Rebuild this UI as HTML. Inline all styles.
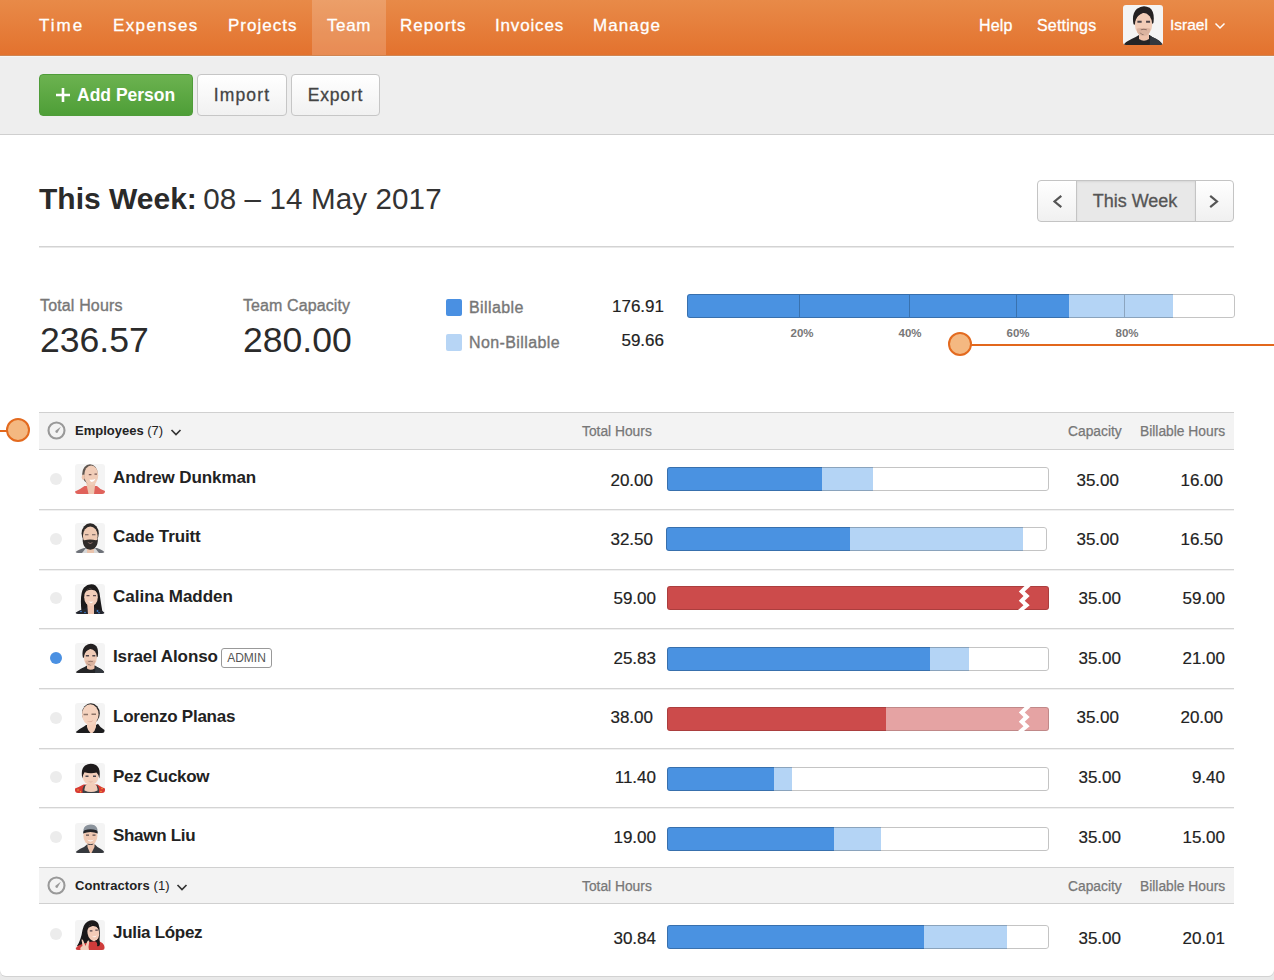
<!DOCTYPE html>
<html lang="en">
<head>
<meta charset="utf-8">
<title>Team – This Week</title>
<style>
*{box-sizing:border-box;margin:0;padding:0}
html,body{width:1274px;height:980px;overflow:hidden}
body{font-family:"Liberation Sans",sans-serif;background:#e9e9e9;color:#222;position:relative}
.page{position:absolute;left:0;top:0;width:1274px;height:976px;background:#fff;border-radius:0 0 6px 6px;overflow:hidden;box-shadow:0 1px 0 #d2d2d2}
/* top nav */
.nav{position:absolute;left:0;top:0;width:1274px;height:56px;background:linear-gradient(#e88a48,#e3722e);border-bottom:1px solid #cf8552}
.nav a{-webkit-text-stroke:.3px #fff;position:absolute;top:0;height:55px;line-height:52px;color:#fff;text-decoration:none;font-size:17px;white-space:nowrap}
.nav a.on{background:rgba(255,255,255,.18);text-align:center}
.nav a.sm{font-size:16px;line-height:52px}
.nav .me{position:absolute;left:1123px;top:5px;width:40px;height:40px;border-radius:3px;overflow:hidden}
.nav .chev{position:absolute;left:1214px;top:22px}
/* sub nav */
.sub{position:absolute;left:0;top:56px;width:1274px;height:79px;background:#eee;border-bottom:1px solid #cfcfcf;box-shadow:inset 0 1px 0 #f6f6f6}
.btn{-webkit-text-stroke:.3px #444;position:absolute;top:18px;height:42px;border:1px solid #c6c6c6;border-radius:4px;background:linear-gradient(#fff,#f1f1f1);color:#444;font-size:17.5px;letter-spacing:.8px;line-height:41px;text-align:center;white-space:nowrap}
.btn.green{-webkit-text-stroke:0;line-height:40px;border:1px solid #4f9c39;background:linear-gradient(#6cb250,#4e9e37);color:#fff;font-weight:700;font-size:17.5px;letter-spacing:0;text-align:left}
.btn.green .plus{position:absolute;left:16px;top:13px}
.btn.green span{position:absolute;left:37px;top:0}
/* heading */
h1{position:absolute;left:39px;top:179px;font-size:30px;line-height:40px;font-weight:700;color:#2a2a2a;white-space:nowrap;letter-spacing:0}
h1 span{font-weight:400;font-size:29.6px;letter-spacing:.1px;margin-left:-2px;color:#333}
.wk{position:absolute;left:1037px;top:180px;width:197px;height:42px;border:1px solid #c4c4c4;border-radius:4px;background:linear-gradient(#fff,#f0f0f0);overflow:hidden}
.wk .mid{-webkit-text-stroke:.3px #555;position:absolute;left:38px;text-indent:-2px;top:-1px;width:120px;height:42px;background:#e8e8e8;border:1px solid #c4c4c4;box-shadow:inset 0 1px 2px rgba(0,0,0,.08);font-size:18px;line-height:40px;text-align:center;color:#555}
.wk svg{position:absolute;top:13px}
hr.rule{position:absolute;left:39px;top:246px;width:1195px;height:2px;border:0;background:linear-gradient(#d3d3d3 50%,#e9e9e9 50%)}
/* stats */
.lbl{-webkit-text-stroke:.35px #777;position:absolute;font-size:16px;color:#777;white-space:nowrap;line-height:20px}
.big{position:absolute;font-size:35.6px;line-height:40px;color:#2b2b2b;white-space:nowrap}
.sw{position:absolute;left:446px;width:16px;height:17px;border-radius:2px}
.num{-webkit-text-stroke:.2px #222;position:absolute;font-size:17px;line-height:20px;color:#222;text-align:right;white-space:nowrap}
.tbar{left:687px;top:294px;width:548px}
.tick{position:absolute;top:295px;width:1px;height:22px;background:rgba(0,0,0,.22)}
.pct{position:absolute;top:326px;width:40px;text-align:center;font-size:11.5px;font-weight:700;color:#777;line-height:14px}
.pin{position:absolute;width:24px;height:24px;border-radius:50%;background:#f4b881;border:2px solid #e36a1f}
.pinline{position:absolute;height:2px;background:#e2671c}
/* table */
.ghead{position:absolute;left:39px;width:1195px;height:38px;background:#f3f3f3;border-top:1px solid #d0d0d0;border-bottom:1px solid #d0d0d0}
.ghead b{position:absolute;left:36px;top:10px;font-size:13px;line-height:16px;color:#222;white-space:nowrap}
.ghead b em{font-style:normal;font-weight:400}
.ghead .clock{position:absolute;left:8px;top:8px}
.ghead .dn{position:absolute;top:16px}
.ghead span{-webkit-text-stroke:.25px #777;position:absolute;top:11px;font-size:13.8px;line-height:16px;color:#777;white-space:nowrap}
.row{position:absolute;left:39px;width:1195px;height:60px;border-bottom:1px solid #d4d4d4;box-shadow:0 1px 0 #f0f0f0}
.row .dot{position:absolute;left:11px;width:12px;height:12px;border-radius:50%;background:#ececec}
.row .dot.on{background:#4a90e2}
.row .av{position:absolute;left:36px;width:30px;height:30px;border-radius:3px;overflow:hidden}
.row .name{position:absolute;left:74px;font-size:17px;font-weight:700;line-height:20px;color:#222;white-space:nowrap;letter-spacing:-.1px}
.row .tag{position:absolute;left:182px;width:51px;height:20px;border:1px solid #999;border-radius:3px;font-size:12px;line-height:18px;text-align:center;color:#555}
.row .n{-webkit-text-stroke:.2px #222;position:absolute;font-size:17px;line-height:20px;color:#222;white-space:nowrap;text-align:right;width:80px}
.bar{position:absolute;height:24px;border-radius:3px;background:#fff;overflow:hidden}
.bar::after{content:"";position:absolute;left:0;top:0;right:0;bottom:0;border-radius:3px;box-shadow:inset 0 0 0 1px rgba(0,0,0,.23)}
.bar i{position:absolute;top:0;height:24px}
.b1{background:#4a92e1;left:0}
.b2{background:#b4d4f5}
.r1{background:#cc4b4b;left:0}
.r2{background:#e5a3a3}
.bar svg{position:absolute;top:0;z-index:2}
.bar.over::after{box-shadow:inset 0 0 0 1px rgba(0,0,0,.16)}
</style>
</head>
<body>
<div class="page">

<div class="nav">
  <a style="left:39px;letter-spacing:2px">Time</a>
  <a style="left:113px;letter-spacing:1.38px">Expenses</a>
  <a style="left:228px;letter-spacing:1.03px">Projects</a>
  <a class="on" style="left:312px;width:74px;letter-spacing:.65px">Team</a>
  <a style="left:400px;letter-spacing:1.01px">Reports</a>
  <a style="left:495px;letter-spacing:.83px">Invoices</a>
  <a style="left:593px;letter-spacing:1.1px">Manage</a>
  <a class="sm" style="left:979px;letter-spacing:.2px">Help</a>
  <a class="sm" style="left:1037px;letter-spacing:.2px">Settings</a>
  <div class="me">
    <svg width="40" height="40" viewBox="0 0 30 30"><rect width="30" height="30" fill="#f4f4f4"/><path d="M0.500 30Q1 27.800 9.500 24L12 22.500H20L22 24Q29 27 29.500 30Z" fill="#242426"/><path d="M20.500 23L22 24Q29 27 29.500 30H20Z" fill="#33383e"/><path d="M12 20H19.500V25.500Q15.700 28 12 25.500Z" fill="#eec2ab"/><path d="M7.900 14.500Q6.300 6.500 10.500 2.800Q15 -0.600 20 2Q24 5 22.800 13.500L21.500 14.500L9.300 15Z" fill="#242122"/><ellipse cx="15.400" cy="14.600" rx="6.500" ry="8.600" fill="#f1ccb7"/><path d="M8.900 12.500Q9.200 8 11.500 6.300Q13 5.600 15 5.800Q13 7 11.500 8Q9.800 9.500 8.900 12.500Z" fill="#242122"/><path d="M10.300 17.800Q12 17 15.500 17.400Q19 17 20.500 17.800Q20.500 21 18 22.600Q15.300 23.800 12.500 22.600Q10.300 21 10.300 17.800Z" fill="#dbb39f"/><path d="M12.300 20.300Q13.800 22.300 16.300 22Q13.800 23 12.300 20.300Z" fill="#4a3a36"/><path d="M10.800 11.900h3.200v1.500h-3.200zM17.300 11.900h3v1.500h-3z" fill="#4d4449"/><path d="M13.200 18.300Q15.500 17.300 18 18.300L17.800 19Q15.500 18.300 13.400 19Z" fill="#8d6e63"/></svg>
  </div>
  <a class="sm" style="left:1170px;font-size:15.5px;line-height:49px">Israel</a>
  <svg class="chev" width="12" height="8" viewBox="0 0 12 8"><path d="M1.5 1.5L6 6l4.500-4.500" fill="none" stroke="#fff" stroke-width="1.5"/></svg>
</div>

<div class="sub">
  <div class="btn green" style="left:39px;width:154px">
    <svg class="plus" width="14" height="14" viewBox="0 0 14 14"><path d="M7 0v14M0 7h14" stroke="#fff" stroke-width="2.600" fill="none"/></svg>
    <span>Add Person</span>
  </div>
  <div class="btn" style="left:197px;width:90px;letter-spacing:1.15px">Import</div>
  <div class="btn" style="left:291px;width:89px">Export</div>
</div>

<h1>This Week: <span>08 – 14 May 2017</span></h1>
<div class="wk">
  <svg style="left:14px" width="12" height="15" viewBox="0 0 12 15"><path d="M9.300 1.800L2.500 7.500L9.300 13.200" fill="none" stroke="#555" stroke-width="2.200"/></svg>
  <div class="mid">This Week</div>
  <svg style="left:170px" width="12" height="15" viewBox="0 0 12 15"><path d="M2.200 1.800L9 7.500L2.200 13.200" fill="none" stroke="#555" stroke-width="2.200"/></svg>
</div>
<hr class="rule">

<div class="lbl" style="left:40px;top:296px;letter-spacing:.15px">Total Hours</div>
<div class="big" style="left:40px;top:320px">236.57</div>
<div class="lbl" style="left:243px;top:296px;letter-spacing:.1px">Team Capacity</div>
<div class="big" style="left:243px;top:320px">280.00</div>

<div class="sw" style="top:299px;background:#4a90e2"></div>
<div class="lbl" style="left:469px;top:298px;letter-spacing:.4px">Billable</div>
<div class="sw" style="top:334px;background:#b7d5f5"></div>
<div class="lbl" style="left:469px;top:333px;letter-spacing:.4px">Non-Billable</div>
<div class="num" style="left:584px;width:80px;top:297px">176.91</div>
<div class="num" style="left:584px;width:80px;top:331px">59.66</div>

<div class="bar tbar"><i class="b1" style="width:382px"></i><i class="b2" style="left:382px;width:104px"></i></div>
<div class="tick" style="left:799px"></div>
<div class="tick" style="left:909px"></div>
<div class="tick" style="left:1016px"></div>
<div class="tick" style="left:1124px"></div>
<div class="pct" style="left:782px">20%</div>
<div class="pct" style="left:890px">40%</div>
<div class="pct" style="left:998px">60%</div>
<div class="pct" style="left:1107px">80%</div>

<div class="pinline" style="left:960px;top:344px;width:314px"></div>
<div class="pin" style="left:948px;top:332px"></div>
<div class="pinline" style="left:0;top:430px;width:10px"></div>
<div class="pin" style="left:6px;top:418px"></div>

<!-- Employees -->
<div class="ghead" style="top:412px;height:38px">
  <svg class="clock" width="19" height="19" viewBox="0 0 19 19"><circle cx="9.500" cy="9.500" r="8" fill="none" stroke="#999" stroke-width="2.100"/><path d="M8.200 10.100L13.800 5.800L10.300 12Q8.500 12.300 8.200 10.100Z" fill="#999"/></svg>
  <b>Employees <em>(7)</em></b>
  <svg class="dn" style="left:131px" width="12" height="8" viewBox="0 0 12 8"><path d="M1.500 1L6 5.500L10.500 1" fill="none" stroke="#333" stroke-width="1.700"/></svg>
  <span style="left:543px">Total Hours</span>
  <span style="left:1029px">Capacity</span>
  <span style="left:1101px">Billable Hours</span>
</div>
<div class="row" style="top:450px;height:60px">
  <div class="dot" style="top:23px"></div>
  <div class="av" style="top:14px"><svg width="30" height="30" viewBox="0 0 30 30"><rect width="30" height="30" fill="#f4f4f4"/><path d="M0 30V27.500Q5 25.500 9.500 22H22Q25 25.500 30 27V30Z" fill="#e0625b"/><path d="M11 18H20.500L19 30H13.500Z" fill="#eec6b0"/><ellipse cx="15" cy="10" rx="7.800" ry="9.800" fill="#5f5650"/><ellipse cx="16.200" cy="11.300" rx="7" ry="9.900" fill="#f1cdb8"/><ellipse cx="8.300" cy="13.200" rx="1.600" ry="2.600" fill="#edc4ad"/><path d="M14.500 15.500Q17.500 16.500 20.500 14.800Q19 18.500 16 17.800Q14.800 17 14.500 15.500Z" fill="#fff"/><path d="M19.500 9.500h2.500v1.200h-2.500zM13.800 10h2.600v1.200h-2.600z" fill="#7a5a55"/></svg></div>
  <div class="name" style="top:18px;letter-spacing:-.1px">Andrew Dunkman</div>
  <div class="n" style="left:534px;top:21px">20.00</div>
  <div class="bar" style="left:628px;top:17px;width:382px"><i class="b1" style="left:0px;width:155px"></i><i class="b2" style="left:155px;width:51px"></i></div>
  <div class="n" style="left:1000px;top:21px">35.00</div>
  <div class="n" style="left:1104px;top:21px">16.00</div>
</div>
<div class="row" style="top:510px;height:60px">
  <div class="dot" style="top:23px"></div>
  <div class="av" style="top:13px"><svg width="30" height="30" viewBox="0 0 30 30"><rect width="30" height="30" fill="#f4f4f4"/><path d="M0 30Q1 27.500 9 25H22Q29 27.500 30 30Z" fill="#6d7178"/><path d="M7 30L11 25H20L24 30Z" fill="#d8d8d8"/><path d="M12 24H19V30H12Z" fill="#eac4ad"/><ellipse cx="15.200" cy="10.500" rx="8.600" ry="10.300" fill="#2b2827"/><ellipse cx="15.300" cy="13" rx="7.400" ry="9.500" fill="#efcab3"/><path d="M7.800 14Q8 17.500 9.500 17.300Q15 15.500 21 17.300Q22.600 17.500 22.800 14Q23.500 22 19.500 25.500Q15.300 27.800 11 25.500Q7 22 7.800 14Z" fill="#2f2b2a"/><path d="M12.500 19.300Q15.300 20.800 18 19.300Q15.300 21.800 12.500 19.300Z" fill="#f0b9b0"/><path d="M10 11.200h3.500v1.100H10zM17 11.200h3.500v1.100H17z" fill="#6b5a57"/></svg></div>
  <div class="name" style="top:17px;letter-spacing:-.1px">Cade Truitt</div>
  <div class="n" style="left:534px;top:20px">32.50</div>
  <div class="bar" style="left:627px;top:17px;width:381px"><i class="b1" style="left:0px;width:184px"></i><i class="b2" style="left:184px;width:173px"></i></div>
  <div class="n" style="left:1000px;top:20px">35.00</div>
  <div class="n" style="left:1104px;top:20px">16.50</div>
</div>
<div class="row" style="top:570px;height:59px">
  <div class="dot" style="top:22px"></div>
  <div class="av" style="top:14px"><svg width="30" height="30" viewBox="0 0 30 30"><rect width="30" height="30" fill="#f4f4f4"/><path d="M6.500 28Q4.500 9 9 3.500Q13 -0.500 18.500 0.500Q23 2 24.500 9Q26 20 27.500 28Z" fill="#1c1a1b"/><path d="M0 30Q1 27 8 25.500Q11 24 12 23H19Q21 24.500 24 25.500Q29 27 30 30Z" fill="#23252d"/><path d="M12.200 20H19V30H13Z" fill="#efc5b0"/><ellipse cx="16" cy="13.200" rx="6.800" ry="9" fill="#f2cdb9"/><path d="M9.200 9Q12 4.500 17 4Q21.500 4.500 22.800 9Q20 5.500 16 5.800Q11.500 6 9.200 9Z" fill="#1c1a1b"/><path d="M13.300 17.200Q16 18.500 18.700 17.200Q16 20.800 13.300 17.200Z" fill="#fff"/><path d="M11.500 11h3v1.300h-3zM18 11h3v1.300h-3z" fill="#5b4a4d"/><circle cx="6" cy="27.500" r=".8" fill="#3f83d8"/><circle cx="10" cy="28.500" r=".8" fill="#3f83d8"/><circle cx="22.500" cy="27" r=".9" fill="#3f83d8"/><circle cx="24" cy="28.800" r=".8" fill="#3f83d8"/></svg></div>
  <div class="name" style="top:17px;letter-spacing:0">Calina Madden</div>
  <div class="n" style="left:537px;top:19px">59.00</div>
  <div class="bar over" style="left:628px;top:16px;width:382px"><i class="r1" style="left:0px;width:382px"></i><svg style="left:350px" width="14" height="24" viewBox="0 0 14 24"><path d="M7.500 0L1.800 5.600L6.500 10.100L1.800 14.800L6.500 19.300L1 24L7 24L12.700 19.300L7.700 14.800L12.700 10.100L7.700 5.600L13.600 0Z" fill="#fff"/></svg></div>
  <div class="n" style="left:1002px;top:19px">35.00</div>
  <div class="n" style="left:1106px;top:19px">59.00</div>
</div>
<div class="row" style="top:629px;height:60px">
  <div class="dot on" style="top:23px"></div>
  <div class="av" style="top:14px"><svg width="30" height="30" viewBox="0 0 30 30"><rect width="30" height="30" fill="#f4f4f4"/><path d="M0.500 30Q1 27.800 9.500 24L12 22.500H20L22 24Q29 27 29.500 30Z" fill="#242426"/><path d="M20.500 23L22 24Q29 27 29.500 30H20Z" fill="#33383e"/><path d="M12 20H19.500V25.500Q15.700 28 12 25.500Z" fill="#eec2ab"/><path d="M7.900 14.500Q6.300 6.500 10.500 2.800Q15 -0.600 20 2Q24 5 22.800 13.500L21.500 14.500L9.300 15Z" fill="#242122"/><ellipse cx="15.400" cy="14.600" rx="6.500" ry="8.600" fill="#f1ccb7"/><path d="M8.900 12.500Q9.200 8 11.500 6.300Q13 5.600 15 5.800Q13 7 11.500 8Q9.800 9.500 8.900 12.500Z" fill="#242122"/><path d="M10.300 17.800Q12 17 15.500 17.400Q19 17 20.500 17.800Q20.500 21 18 22.600Q15.300 23.800 12.500 22.600Q10.300 21 10.300 17.800Z" fill="#dbb39f"/><path d="M12.300 20.300Q13.800 22.300 16.300 22Q13.800 23 12.300 20.300Z" fill="#4a3a36"/><path d="M10.800 11.900h3.200v1.500h-3.200zM17.300 11.900h3v1.500h-3z" fill="#4d4449"/><path d="M13.200 18.300Q15.500 17.300 18 18.300L17.800 19Q15.500 18.300 13.400 19Z" fill="#8d6e63"/></svg></div>
  <div class="name" style="top:18px;letter-spacing:-.1px">Israel Alonso</div>
  <div class="tag" style="top:19px">ADMIN</div>
  <div class="n" style="left:537px;top:20px">25.83</div>
  <div class="bar" style="left:628px;top:18px;width:382px"><i class="b1" style="left:0px;width:263px"></i><i class="b2" style="left:263px;width:39px"></i></div>
  <div class="n" style="left:1002px;top:20px">35.00</div>
  <div class="n" style="left:1106px;top:20px">21.00</div>
</div>
<div class="row" style="top:689px;height:60px">
  <div class="dot" style="top:23px"></div>
  <div class="av" style="top:14px"><svg width="30" height="30" viewBox="0 0 30 30"><rect width="30" height="30" fill="#f4f4f4"/><path d="M0.500 30Q0.800 28 9 23.500L11 22H21L23 20.800Q24.500 24 29.500 27V30Z" fill="#1c1c1e"/><path d="M12 18H21V24Q20 28 17.500 30H15.500Q12.500 27 12 24Z" fill="#f3cdb8"/><ellipse cx="15.900" cy="10.500" rx="8.900" ry="10.300" fill="#2a2828"/><ellipse cx="15.300" cy="11.600" rx="8.300" ry="10.300" fill="#f5d3bf"/><path d="M8.500 10.800h4.500v1.500H8.500zM16.500 10.500h4.500v1.500h-4.500z" fill="#8d7468"/><path d="M11.500 17.500Q14.500 19.500 18.500 17.300Q15 21 11.500 17.500Z" fill="#d9a595"/></svg></div>
  <div class="name" style="top:18px;letter-spacing:-.25px">Lorenzo Planas</div>
  <div class="n" style="left:534px;top:19px">38.00</div>
  <div class="bar over" style="left:628px;top:18px;width:382px"><i class="r1" style="left:0px;width:219px"></i><i class="r2" style="left:219px;width:163px"></i><svg style="left:350px" width="14" height="24" viewBox="0 0 14 24"><path d="M7.500 0L1.800 5.600L6.500 10.100L1.800 14.800L6.500 19.300L1 24L7 24L12.700 19.300L7.700 14.800L12.700 10.100L7.700 5.600L13.600 0Z" fill="#fff"/></svg></div>
  <div class="n" style="left:1000px;top:19px">35.00</div>
  <div class="n" style="left:1104px;top:19px">20.00</div>
</div>
<div class="row" style="top:749px;height:59px">
  <div class="dot" style="top:22px"></div>
  <div class="av" style="top:14px"><svg width="30" height="30" viewBox="0 0 30 30"><rect width="30" height="30" fill="#f4f4f4"/><path d="M0 30V25.500Q4 24 8.500 21.500H22.500Q26 24 30 25.500V30Z" fill="#d83a33"/><path d="M7.500 30Q7 24.500 9.500 22H22Q24.500 24.500 24 30Z" fill="#3b4046"/><path d="M9.500 27.500Q9 23 12 21H20Q23 23 22.500 27.500Q16 30.500 9.500 27.500Z" fill="#f2cdb9"/><ellipse cx="15.700" cy="13.800" rx="7.900" ry="8.200" fill="#f3cfbb"/><path d="M7.300 15.500Q5.500 6 10 2.500Q15 -0.800 21 2Q26 5 24.300 15.500Q23.500 11 21.500 9.500Q16 11 9.500 9.300Q8 11.500 7.300 15.500Z" fill="#1e1b1c"/><path d="M10.500 12.500h3v1.400h-3zM18 12.500h3v1.400h-3z" fill="#4c4a52"/><path d="M13 18.300Q15.700 19.300 18.500 18.300Q15.700 20 13 18.300Z" fill="#c98f88"/><circle cx="3" cy="27" r=".7" fill="#f3b13a"/><circle cx="5.500" cy="28.800" r=".7" fill="#f3b13a"/><circle cx="27" cy="25.500" r=".7" fill="#f3b13a"/><circle cx="26" cy="28.500" r=".7" fill="#f3b13a"/></svg></div>
  <div class="name" style="top:18px;letter-spacing:-.3px">Pez Cuckow</div>
  <div class="n" style="left:537px;top:19px">11.40</div>
  <div class="bar" style="left:628px;top:18px;width:382px"><i class="b1" style="left:0px;width:107px"></i><i class="b2" style="left:107px;width:18px"></i></div>
  <div class="n" style="left:1002px;top:19px">35.00</div>
  <div class="n" style="left:1106px;top:19px">9.40</div>
</div>
<div class="row" style="top:808px;height:59px;border-bottom:0">
  <div class="dot" style="top:23px"></div>
  <div class="av" style="top:15px"><svg width="30" height="30" viewBox="0 0 30 30"><rect width="30" height="30" fill="#f4f4f4"/><path d="M0.500 30Q0.500 27.800 9 24L12 21.500H20L22.500 24Q29.500 27.500 29.500 30Z" fill="#35383d"/><path d="M12.500 19H19.500V24L16.500 30H15L12.500 24Z" fill="#eec3ac"/><ellipse cx="15.400" cy="13" rx="7" ry="9" fill="#f0c9b3"/><path d="M8.300 9.500Q8 3.500 12 2.200Q16 1 19.500 2.200Q23 4 22.600 9.500Q15.500 6 8.300 9.500Z" fill="#8b939c"/><path d="M8 10.500Q8.200 8 9.500 7.300Q15.500 5.200 21.500 7.300Q22.800 8 22.800 10.500Q15.500 7.300 8 10.500Z" fill="#25262a"/><path d="M11 11.500h3v1.300h-3zM17.500 11.500h3v1.300h-3z" fill="#5a4a4a"/><path d="M12 16.500Q15.500 18.300 19 16.500Q15.500 20.500 12 16.500Z" fill="#fff"/><path d="M12.500 20.500Q15.500 22 18.500 20.500L18 21.500Q15.500 22.500 13 21.500Z" fill="#3a3d44"/></svg></div>
  <div class="name" style="top:18px;letter-spacing:-.3px">Shawn Liu</div>
  <div class="n" style="left:537px;top:20px">19.00</div>
  <div class="bar" style="left:628px;top:19px;width:382px"><i class="b1" style="left:0px;width:167px"></i><i class="b2" style="left:167px;width:47px"></i></div>
  <div class="n" style="left:1002px;top:20px">35.00</div>
  <div class="n" style="left:1106px;top:20px">15.00</div>
</div>
<!-- Contractors -->
<div class="ghead" style="top:867px;height:37px">
  <svg class="clock" width="19" height="19" viewBox="0 0 19 19"><circle cx="9.500" cy="9.500" r="8" fill="none" stroke="#999" stroke-width="2.100"/><path d="M8.200 10.100L13.800 5.800L10.300 12Q8.500 12.300 8.200 10.100Z" fill="#999"/></svg>
  <b style="letter-spacing:.1px">Contractors <em>(1)</em></b>
  <svg class="dn" style="left:137px" width="12" height="8" viewBox="0 0 12 8"><path d="M1.500 1L6 5.500L10.500 1" fill="none" stroke="#333" stroke-width="1.700"/></svg>
  <span style="left:543px">Total Hours</span>
  <span style="left:1029px">Capacity</span>
  <span style="left:1101px">Billable Hours</span>
</div>
<div class="row" style="top:904px;height:72px;border-bottom:0">
  <div class="dot" style="top:24px"></div>
  <div class="av" style="top:16px"><svg width="30" height="30" viewBox="0 0 30 30"><rect width="30" height="30" fill="#f4f4f4"/><path d="M2 26Q6 20 7.500 10Q9 2 15 0.500Q21 -0.500 23.500 4Q25.500 9 24.500 20L25 26Z" fill="#1b191a"/><path d="M0.500 30Q0.500 26 6 24.500L14 22L23 21Q29 22.500 29.500 27V30Z" fill="#cf3b3a"/><ellipse cx="18.300" cy="12.800" rx="5.800" ry="8.400" transform="rotate(-10 18.300 12.800)" fill="#f2cbb8"/><path d="M12.500 9Q14.500 3.500 20 3.800Q23.500 4.500 24 9Q21 5.500 17.500 6Q14 7 12.500 9Z" fill="#1b191a"/><path d="M20 21Q23 23 22 26Q24.500 27 25 24Q25 21 23.500 19Z" fill="#1b191a"/><path d="M6.500 19.500Q7.800 19 8.200 20.500L10.500 26L12.500 21Q13.300 20 14.300 20.800L13.500 27L14 30H5.500Q4.500 27.500 7.500 26Z" fill="#f3cdb9"/><path d="M14.800 10.300h2.600v1.300h-2.600zM20.300 9.500h2.500v1.300h-2.500z" fill="#4f4248"/><path d="M16.500 16Q19 17.300 21.800 15.300Q20 19 16.500 16Z" fill="#fff"/></svg></div>
  <div class="name" style="top:19px;letter-spacing:-.3px">Julia López</div>
  <div class="n" style="left:537px;top:25px">30.84</div>
  <div class="bar" style="left:628px;top:21px;width:382px"><i class="b1" style="left:0px;width:257px"></i><i class="b2" style="left:257px;width:83px"></i></div>
  <div class="n" style="left:1002px;top:25px">35.00</div>
  <div class="n" style="left:1106px;top:25px">20.01</div>
</div>

</div>
</body>
</html>
